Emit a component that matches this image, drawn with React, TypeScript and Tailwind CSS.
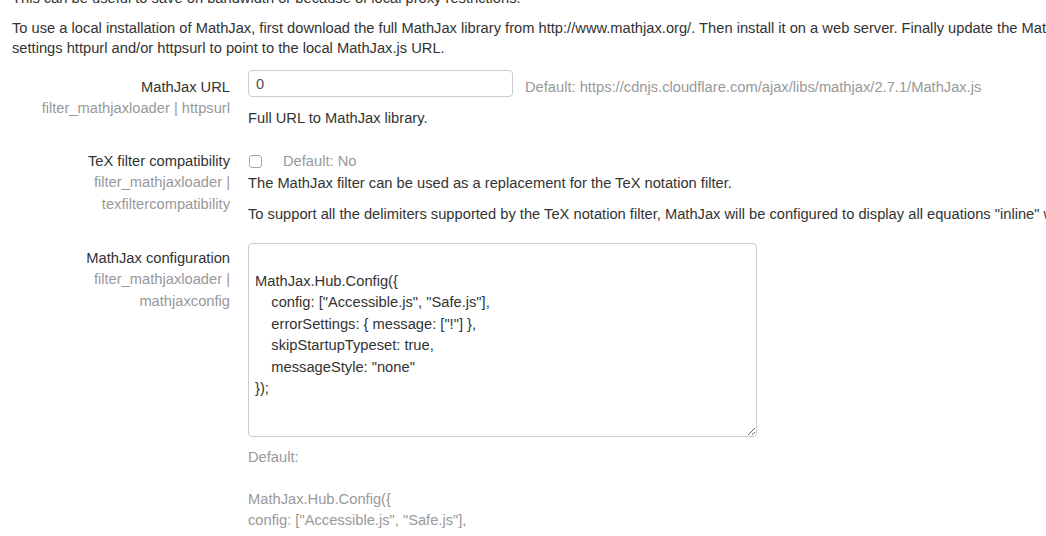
const CONFIG = `
MathJax.Hub.Config({
    config: ["Accessible.js", "Safe.js"],
    errorSettings: { message: ["!"] },
    skipStartupTypeset: true,
    messageStyle: "none"
});
`;

function Label({ title, lines }: { title: string; lines: string[] }) {
  return (
    <div className="w-[230px] shrink-0 text-right">
      <div className="leading-[20px]">{title}</div>
      {lines.map((l) => (
        <div key={l} className="leading-[22px] text-[#999]">
          {l}
        </div>
      ))}
    </div>
  );
}

export default function App() {
  return (
    <div className="w-[1046px] h-[536px] overflow-hidden bg-white text-[14.7px] leading-[20px] text-[#333] font-['Liberation_Sans',Arial,sans-serif]">
      <div className="-mt-[12px] pl-[12px] whitespace-nowrap">
        <p className="mb-[10px]">This can be useful to save on bandwidth or because of local proxy restrictions.</p>
        <p className="mb-[10px]">
          To use a local installation of MathJax, first download the full MathJax library from http://www.mathjax.org/. Then install it on a web server. Finally update the MathJax filter
          <br />
          settings httpurl and/or httpsurl to point to the local MathJax.js URL.
        </p>
      </div>

      {/* MathJax URL */}
      <div className="flex">
        <div className="pt-[9px]">
          <Label title="MathJax URL" lines={["filter_mathjaxloader | httpsurl"]} />
        </div>
        <div className="ml-[18px]">
          <div className="flex items-start">
            <input
              readOnly
              defaultValue="0"
              className="mt-[2px] h-[27px] w-[265px] rounded-[4px] border border-[#ccc] px-[7px] text-[#555] outline-none"
            />
            <span className="ml-[12px] mt-[9px] whitespace-nowrap text-[#999]">
              Default: https://cdnjs.cloudflare.com/ajax/libs/mathjax/2.7.1/MathJax.js
            </span>
          </div>
          <p className="mt-[11px]">Full URL to MathJax library.</p>
        </div>
      </div>

      {/* TeX filter compatibility */}
      <div className="mt-[23px] flex">
        <Label title="TeX filter compatibility" lines={["filter_mathjaxloader |", "texfiltercompatibility"]} />
        <div className="ml-[18px] whitespace-nowrap">
          <div className="flex h-[20px] items-center">
            <span className="ml-[1px] h-[13px] w-[13px] rounded-[3px] border border-[#aaa] bg-white" />
            <span className="ml-[21px] text-[#999]">Default: No</span>
          </div>
          <p className="mt-[2px]">The MathJax filter can be used as a replacement for the TeX notation filter.</p>
          <p className="mt-[11px]">
            To support all the delimiters supported by the TeX notation filter, MathJax will be configured to display all equations "inline" with TeX.
          </p>
        </div>
      </div>

      {/* MathJax configuration */}
      <div className="mt-[19px] flex">
        <div className="pt-[5px]">
          <Label title="MathJax configuration" lines={["filter_mathjaxloader |", "mathjaxconfig"]} />
        </div>
        <div className="ml-[18px]">
          <textarea
            readOnly
            defaultValue={CONFIG}
            className="block h-[194px] w-[509px] rounded-[4px] border border-[#ccc] px-[6px] pt-[5px] leading-[21.5px] text-[#333] outline-none"
          />
          <div className="mt-[10px] leading-[21px] text-[#999]">
            <div>Default:</div>
            <div>&nbsp;</div>
            <div>MathJax.Hub.Config({"{"}</div>
            <div>config: ["Accessible.js", "Safe.js"],</div>
          </div>
        </div>
      </div>
    </div>
  );
}
